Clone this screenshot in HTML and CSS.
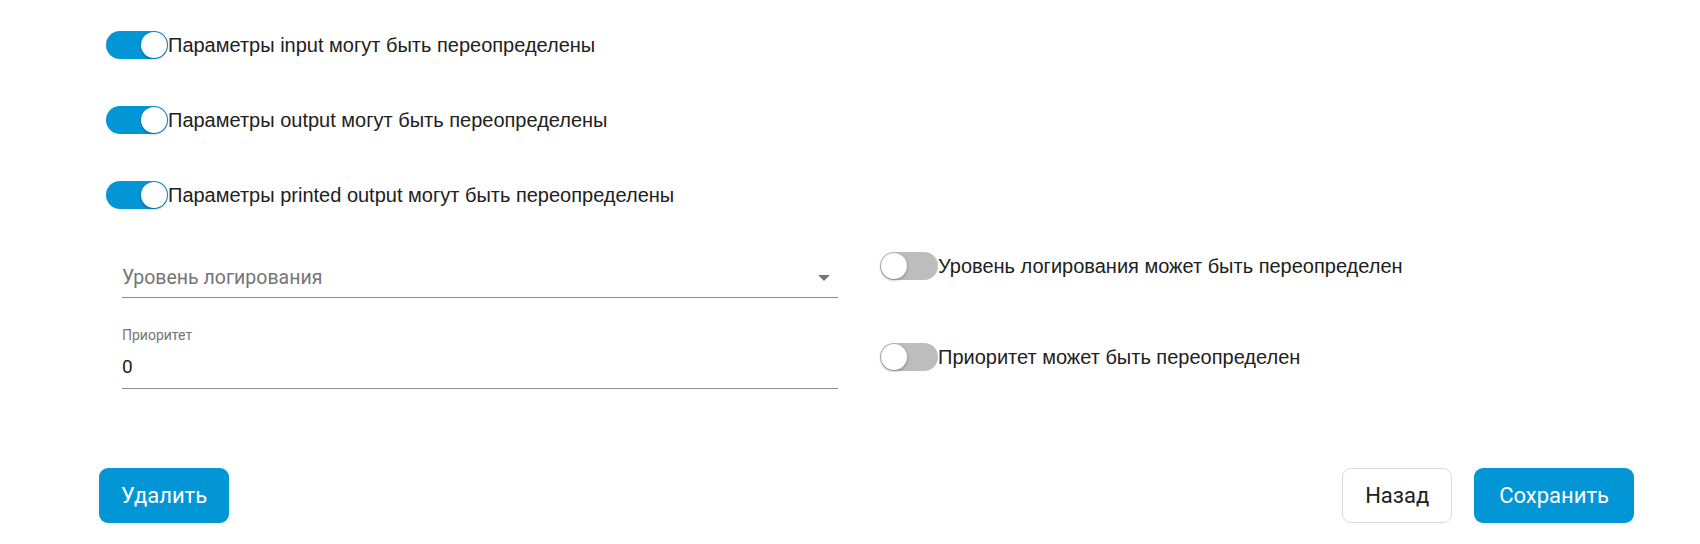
FILE: index.html
```html
<!DOCTYPE html>
<html lang="ru">
<head>
<meta charset="utf-8">
<title>Параметры</title>
<link rel="stylesheet" href="styles.css">
</head>
<body>
<div class="page">
  <div class="toggles">
    <label class="row"><span class="switch on"><span class="knob"></span></span><span class="label">Параметры input могут быть переопределены</span></label>
    <label class="row"><span class="switch on"><span class="knob"></span></span><span class="label">Параметры output могут быть переопределены</span></label>
    <label class="row"><span class="switch on"><span class="knob"></span></span><span class="label">Параметры printed output могут быть переопределены</span></label>
  </div>
  <div class="fields">
    <div class="col-left">
      <div class="select">
        <span class="placeholder">Уровень логирования</span>
        <span class="arrow"></span>
      </div>
      <div class="input">
        <div class="input-label">Приоритет</div>
        <div class="input-value">0</div>
      </div>
    </div>
    <div class="col-right">
      <label class="row"><span class="switch"><span class="knob"></span></span><span class="label">Уровень логирования может быть переопределен</span></label>
      <label class="row row-2"><span class="switch"><span class="knob"></span></span><span class="label">Приоритет может быть переопределен</span></label>
    </div>
  </div>
  <div class="actions">
    <button class="btn primary">Удалить</button>
    <div class="actions-right">
      <button class="btn secondary">Назад</button>
      <button class="btn primary wide">Сохранить</button>
    </div>
  </div>
</div>
</body>
</html>
```

FILE: styles.css
```css
* { box-sizing: border-box; }
html, body { margin: 0; padding: 0; background: #fff; }
body { font-family: "Liberation Sans", Arial, sans-serif; color: #212121; }

.page {
  width: 1700px;
  height: 544px;
  padding: 31px 66px 0 99px;
}

.toggles {
  display: flex;
  flex-direction: column;
  gap: 47px;
  padding-left: 7px;
}

.row {
  display: flex;
  align-items: center;
  height: 28px;
}

.switch {
  position: relative;
  width: 62px;
  height: 28px;
  border-radius: 14px;
  background: #bdbdbd;
  flex: none;
}
.switch.on { background: #0396d6; }
.knob {
  position: absolute;
  top: 1px;
  left: 1px;
  width: 26px;
  height: 26px;
  border-radius: 50%;
  background: #fff;
  box-shadow: 0 1px 3px rgba(0,0,0,0.35);
}
.switch.on .knob { left: 35px; }

.label {
  font-size: 20px;
  line-height: 22px;
  color: #212121;
}

.fields {
  display: flex;
  gap: 42px;
  margin-top: 31px;
  padding-left: 23px;
}

.col-left { width: 716px; }

.select {
  height: 58px;
  display: flex;
  align-items: flex-end;
  justify-content: space-between;
  padding: 0 8px 8px 0;
  border-bottom: 1px solid #8c8c8c;
}
.placeholder {
  font-family: Roboto, "Liberation Sans", sans-serif;
  font-size: 19.5px;
  line-height: 22px;
  color: #757575;
}
.arrow {
  width: 0;
  height: 0;
  border-left: 6px solid transparent;
  border-right: 6px solid transparent;
  border-top: 6px solid #757575;
  margin-bottom: 8px;
}

.input {
  margin-top: 29px;
  border-bottom: 1px solid #8c8c8c;
  padding-bottom: 10px;
}
.input-label {
  font-family: Roboto, "Liberation Sans", sans-serif;
  font-size: 14px;
  line-height: 16px;
  color: #757575;
}
.input-value {
  margin-top: 13px;
  font-family: Roboto, "Liberation Sans", sans-serif;
  font-size: 19px;
  line-height: 22px;
  color: #212121;
}

.col-right {
  padding-top: 12px;
  display: flex;
  flex-direction: column;
}
.col-right .switch { width: 58px; }
.col-right .row-2 { margin-top: 63px; }

.actions {
  display: flex;
  justify-content: space-between;
  margin-top: 79px;
}
.actions-right { display: flex; gap: 22px; }

.btn {
  height: 55px;
  padding: 0 22px;
  border-radius: 9px;
  font-family: Roboto, "Liberation Sans", sans-serif;
  font-size: 22px;
  cursor: pointer;
}
.btn.wide { padding: 0 25px; }
.btn.primary {
  background: #0396d6;
  color: #fff;
  border: none;
}
.btn.secondary {
  background: #fff;
  color: #212121;
  border: 1px solid #dadada;
}
```
